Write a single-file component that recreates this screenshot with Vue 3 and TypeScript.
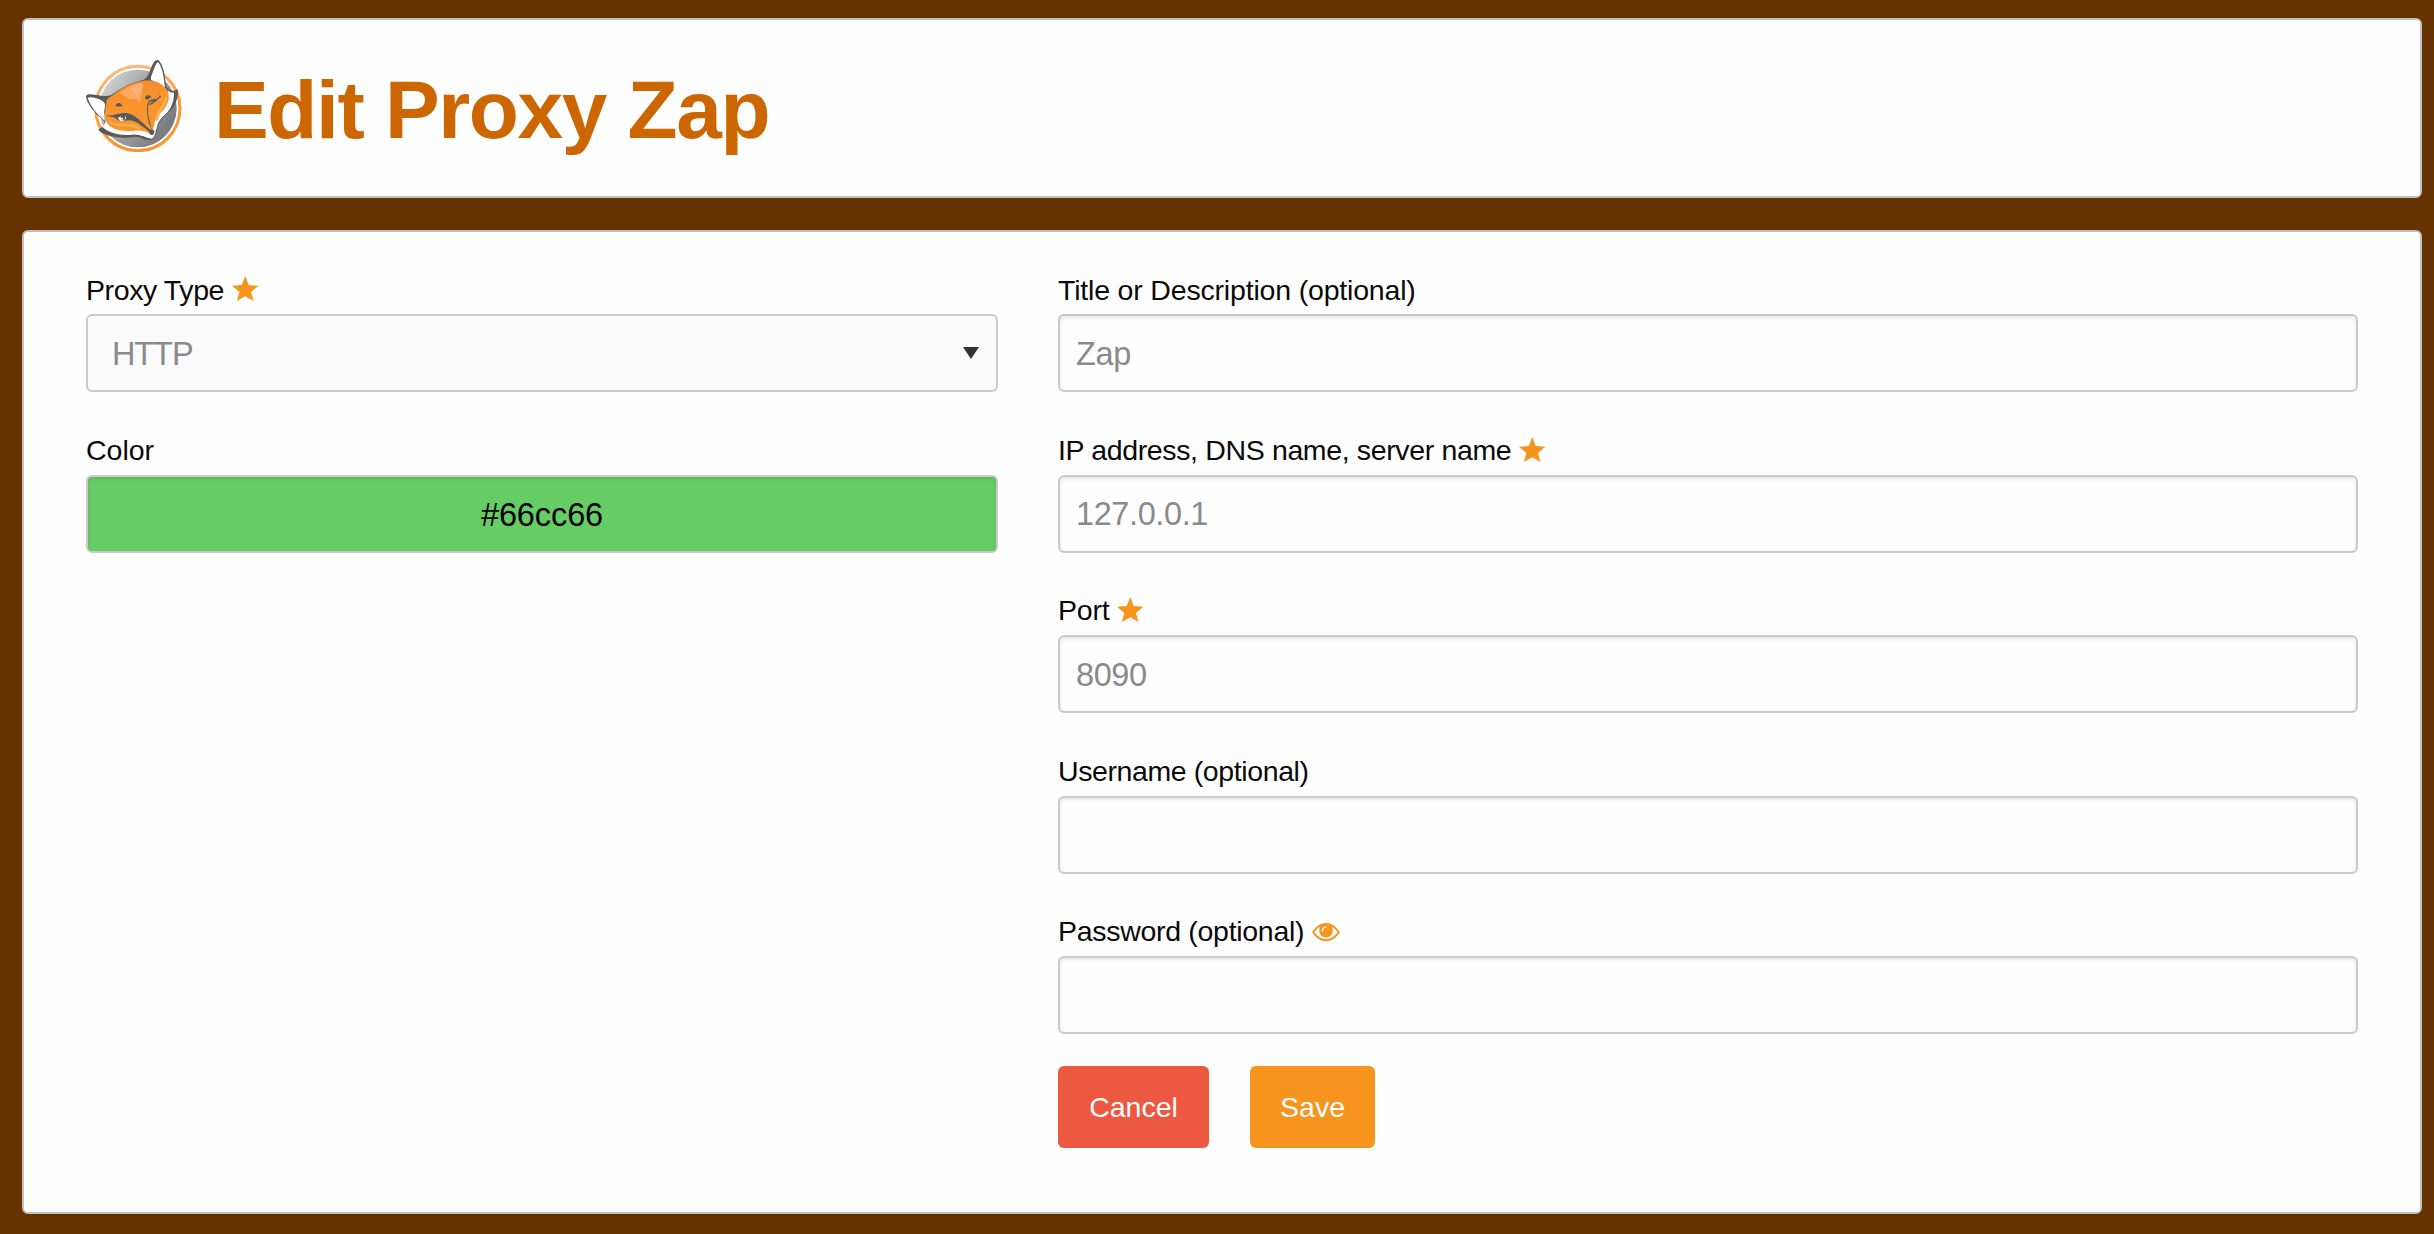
<script setup lang="ts">
import { reactive } from 'vue'

interface Field {
  key: 'title' | 'address' | 'port' | 'username' | 'password'
  label: string
  type: 'text' | 'password'
  icon?: 'star' | 'eye'
}

const proxy = reactive({
  type: 'HTTP',
  color: '#66cc66',
  title: 'Zap',
  address: '127.0.0.1',
  port: '8090',
  username: '',
  password: '',
})

const fields: Field[] = [
  { key: 'title', label: 'Title or Description (optional)', type: 'text' },
  { key: 'address', label: 'IP address, DNS name, server name', type: 'text', icon: 'star' },
  { key: 'port', label: 'Port', type: 'text', icon: 'star' },
  { key: 'username', label: 'Username (optional)', type: 'text' },
  { key: 'password', label: 'Password (optional)', type: 'password', icon: 'eye' },
]

const starPoints = '39.5,0 50,27 79,29.500 57,48 64.500,75 39.500,60.500 14.500,75 22,48 0,29.500 29,27'
</script>

<template>
  <main class="page">
    <header class="panel head">
      <svg class="logo" viewBox="30 30 288 276" aria-hidden="true">
        <defs>
          <linearGradient id="ring" x1="0" y1="0" x2="0.3" y2="1">
            <stop offset="0" stop-color="#fcbd86" />
            <stop offset="0.6" stop-color="#f99d3e" />
            <stop offset="1" stop-color="#f8972f" />
          </linearGradient>
          <linearGradient id="disc" x1="0.05" y1="0.2" x2="0.95" y2="0.75">
            <stop offset="0" stop-color="#d0d2d3" />
            <stop offset="0.45" stop-color="#a0a2a5" />
            <stop offset="1" stop-color="#77787b" />
          </linearGradient>
          <linearGradient id="fur" x1="0.2" y1="0" x2="0.5" y2="1">
            <stop offset="0" stop-color="#f58a2c" />
            <stop offset="0.5" stop-color="#f9942f" />
            <stop offset="1" stop-color="#f99530" />
          </linearGradient>
        </defs>
        <circle cx="185.500" cy="175.500" r="126.500" fill="#fff" stroke="url(#ring)" stroke-width="9" />
        <circle cx="185.500" cy="175.500" r="116.500" fill="url(#disc)" />
        <path fill="#58595b" d="M30 139 Q31 134 38 133 C60 133 80 142 105 136 C135 113 165 98 203 89 C221 81 222 52 234 36 Q240 28 248 31 C258 41 266 65 268 92 C269 112 275 119 289 122 Q298 123 305 118 C308 137 301 165 283 182 C265 199 252 208 247 226 C242 246 240 266 227 270 C209 273 198 260 176 260 C147 265 99 267 67 241 C70 233 84 232 86 222 C86 207 68 203 54 184 C42 170 31 154 30 139Z" />
        <path fill="#fff" d="M35 145 Q36 141 44 142 C62 144 84 151 87 163 C89 173 82 180 86 195 L86 212 C75 201 62 190 54 179 Q40 160 35 145Z" />
        <path fill="#fff" d="M245 36 Q250 38 254 49 C262 68 265 93 267 117 C259 106 243 95 225 91 C223 80 230 69 235 54 Q240 40 245 36Z" />
        <path fill="#fff" d="M87 203 C90 215 88 222 79 231 C99 250 136 258 168 254 C193 252 209 264 226 266 C236 265 238 248 243 230 C248 211 258 202 268 193 C286 176 294 155 294 128 Q284 129 276 122 L220 235Z" />
        <path fill="url(#fur)" d="M91 158 C91 147 100 141 109 137 C136 115 164 99 198 93 C231 88 254 98 266 112 C277 118 280 136 278 149 C273 173 253 188 242 204 C232 219 235 240 226 250 C209 246 198 239 176 242 C145 246 114 241 98 225 C85 216 86 190 88 178Z" />
        <path fill="#fbaa5f" d="M128 132 C151 111 174 101 199 98 Q203 114 198 128 L193 157 Q176 142 161 150 Q158 139 128 132Z" />
        <path fill="#fbb078" d="M159 117 C174 108 187 102 199 99 Q205 117 187 130 L181 142 Q171 120 159 117Z" />
        <g fill="none" stroke="#f9b046" stroke-linecap="round">
          <path d="M103 217 C132 235 163 216 188 234" stroke-width="8" />
          <path d="M242 207 C246 178 269 169 269 144" stroke-width="9" />
        </g>
        <path fill="#58595b" d="M89 196 C112 200 134 185 155 190 C185 196 200 224 227 242 L223 247 C200 232 187 213 160 211 C142 212 127 216 121 206 C115 201 105 202 89 196Z" />
        <path d="M126 203 Q137 197 151 200 Q149 211 138 213 Q129 213 126 203Z" fill="#fff" />
        <circle cx="141" cy="203" r="7" fill="#58595b" />
        <circle cx="138" cy="206" r="3" fill="#fff" />
        <path fill="#58595b" d="M117 170 Q121 157 130 159 Q138 161 140 171 Q131 167 127 171 Q122 166 117 170Z" />
        <path fill="#58595b" d="M206 147 Q209 134 219 136 L228 142 Q220 141 215 150 Q211 144 206 147Z" />
        <path fill="#58595b" d="M256 112 C251 139 238 142 226 151 C215 160 215 174 217 197 L229 245 L218 216 C212 188 210 164 219 152 C235 147 251 137 256 112Z" />
        <path d="M221 163 C232 160 242 148 254 139" fill="none" stroke="#58595b" stroke-width="4" />
        <path d="M224 155 L239 148" fill="none" stroke="#58595b" stroke-width="6" />
        <path fill="#58595b" d="M217 243 Q224 236 235 241 Q236 253 228 256 Q219 253 217 243Z" />
      </svg>
      <h1>Edit Proxy Zap</h1>
    </header>

    <form class="panel form" @submit.prevent>
      <section class="side">
        <div class="field">
          <label class="type" for="proxy-type">
            Proxy Type
            <svg class="star" viewBox="0 0 79 75"><polygon :points="starPoints" fill="#f7941d" /></svg>
          </label>
          <div class="select">
            <select id="proxy-type" v-model="proxy.type">
              <option>HTTP</option>
            </select>
            <svg class="arrow" viewBox="0 0 16 12"><path d="M0 0H16L8 12Z" fill="#333" /></svg>
          </div>
        </div>
        <div class="field">
          <label class="swatch" for="color">Color</label>
          <input id="color" v-model="proxy.color" class="color" :style="{ backgroundColor: proxy.color }" type="text" />
        </div>
      </section>

      <section class="main">
        <div v-for="field in fields" :key="field.key" class="field">
          <label :for="field.key" :class="field.key">
            {{ field.label }}
            <svg v-if="field.icon === 'star'" class="star" viewBox="0 0 79 75">
              <polygon :points="starPoints" fill="#f7941d" />
            </svg>
            <svg v-else-if="field.icon === 'eye'" class="eye" viewBox="0 0 84 56">
              <path fill="#f7941d" fill-rule="evenodd" d="M0 28 C13 9 27 0 42 0 C57 0 71 9 84 28 C71 47 57 55 42 55 C27 55 13 47 0 28Z M7 28 C18 42 29 49 42 49 C55 49 66 42 77 28 C71 20 66 14 59 11 C68 28 57 43 42 43 C27 43 16 28 25 11 C18 14 13 20 7 28Z" />
              <path d="M31 24 Q32 13 42 12" fill="none" stroke="#fff" stroke-width="4" stroke-linecap="round" />
            </svg>
          </label>
          <input :id="field.key" v-model="proxy[field.key]" :type="field.type" />
        </div>
        <div class="actions">
          <button class="cancel" type="button">Cancel</button>
          <button class="save" type="submit">Save</button>
        </div>
      </section>
    </form>
  </main>
</template>

<style>
body {
  margin: 0;
  background: #663300;
}
</style>

<style scoped>
* {
  box-sizing: border-box;
}

.page {
  display: flex;
  flex-direction: column;
  gap: 32px;
  min-height: 1234px;
  padding: 18px 12px 20px 22px;
  background: #663300;
  color: #0a0a0a;
  font-family: "Liberation Sans", Arial, sans-serif;
}

.panel {
  display: flex;
  border: 2px solid #c0c0c0;
  border-radius: 6px;
  background: #fefefe;
}

.head {
  height: 180px;
  padding: 40px 62px 0;
}

.logo {
  width: 96px;
  height: 92px;
}

h1 {
  margin: 4px 0 0 32px;
  color: #cc6600;
  font-size: 82px;
  line-height: 92px;
  letter-spacing: -1.35px;
}

.form {
  flex: 1;
  gap: 60px;
  padding: 32px 62px 0;
}

.side {
  width: 912px;
}

.main {
  flex: 1;
}

.field {
  margin-bottom: 32px;
}

label {
  display: flex;
  align-items: center;
  height: 50.4px;
  padding-top: 2px;
  font-size: 28.5px;
  letter-spacing: -0.22px;
  white-space: nowrap;
}

label.type,
label.username {
  letter-spacing: -0.4px;
}

label.swatch {
  letter-spacing: 0;
}

label.title {
  letter-spacing: -0.18px;
}

label.address {
  letter-spacing: -0.36px;
}

label.password {
  letter-spacing: -0.3px;
}

.star {
  width: 26.4px;
  height: 25px;
  margin: -3px 0 0 8px;
}

.eye {
  width: 28px;
  height: 18.7px;
  margin: 2px 0 0 8px;
}

input,
select {
  display: block;
  width: 100%;
  height: 78px;
  margin: 0;
  padding: 2px 16px 0;
  border: 2px solid #cacaca;
  border-radius: 6px;
  outline: none;
  background-color: #fefefe;
  box-shadow: inset 0 2px 4px rgba(10, 10, 10, 0.1);
  color: #8a8a8a;
  font-family: inherit;
  font-size: 32.5px;
  letter-spacing: -0.4px;
}

.select {
  display: grid;
  align-items: center;
}

.select > * {
  grid-area: 1 / 1;
}

select {
  appearance: none;
  padding: 2px 48px 0 24px;
  background-color: #fafafa;
  box-shadow: none;
  letter-spacing: -1.1px;
}

.arrow {
  justify-self: end;
  width: 16px;
  height: 12px;
  margin-right: 19px;
  pointer-events: none;
}

.color {
  padding-top: 4px;
  color: #000;
  letter-spacing: -0.1px;
  text-align: center;
}

.actions {
  display: flex;
  gap: 41px;
}

button {
  height: 82px;
  padding: 2px 0 0;
  border: 0;
  border-radius: 6px;
  color: #fefefe;
  font-family: inherit;
  font-size: 28.5px;
}

.cancel {
  width: 151px;
  background: #ec5840;
}

.save {
  width: 125px;
  background: #f7941d;
}
</style>
